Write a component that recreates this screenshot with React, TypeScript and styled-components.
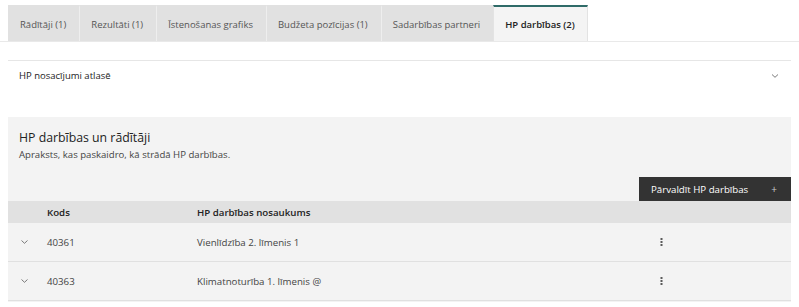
import { createGlobalStyle } from "styled-components";
import styled from "styled-components";

const GlobalStyle = createGlobalStyle`
	body {
		margin: 0;
		background: #fff;
		font-family: "Open Sans", "Noto Sans", sans-serif;
		color: #333;
	}
`;

interface TabProps {
	active?: boolean;
}

const tabs = [
	{ label: "Rādītāji (1)" },
	{ label: "Rezultāti (1)" },
	{ label: "Īstenošanas grafiks" },
	{ label: "Budžeta pozīcijas (1)" },
	{ label: "Sadarbības partneri" },
	{ label: "HP darbības (2)", active: true },
];

const rows = [
	{ code: "40361", name: "Vienlīdzība 2. līmenis 1" },
	{ code: "40363", name: "Klimatnoturība 1. līmenis @" },
];

function Chevron({ width = 7 }: { width?: number }) {
	return (
		<svg width={width} height={4} viewBox="0 0 7 4" fill="none">
			<path d="M0.5 0.5 L3.5 3.3 L6.5 0.5" stroke="#6b6b6b" strokeWidth="0.9" />
		</svg>
	);
}

function Kebab() {
	return (
		<svg width={3} height={8} viewBox="0 0 3 8">
			<rect x="0.5" y="0" width="2" height="2" fill="#5a5a5a" />
			<rect x="0.5" y="3" width="2" height="2" fill="#5a5a5a" />
			<rect x="0.5" y="6" width="2" height="2" fill="#5a5a5a" />
		</svg>
	);
}

function App() {
	return (
		<>
			<GlobalStyle />
			<TabBar>
				{tabs.map((t) => (
					<Tab key={t.label} active={t.active}>
						{t.label}
					</Tab>
				))}
			</TabBar>
			<Content>
				<Accordion>
					<AccordionTitle>HP nosacījumi atlasē</AccordionTitle>
					<Chevron width={8} />
				</Accordion>
				<Section>
					<SectionHead>
						<Title>HP darbības un rādītāji</Title>
						<Subtitle>Apraksts, kas paskaidro, kā strādā HP darbības.</Subtitle>
					</SectionHead>
					<Toolbar>
						<ManageButton>
							<span>Pārvaldīt HP darbības</span>
							<Plus>+</Plus>
						</ManageButton>
					</Toolbar>
					<HeaderRow>
						<Cell />
						<HeadCell>Kods</HeadCell>
						<HeadCell>HP darbības nosaukums</HeadCell>
						<Cell />
					</HeaderRow>
					{rows.map((r) => (
						<Row key={r.code}>
							<ExpandCell>
								<Chevron />
							</ExpandCell>
							<Cell>{r.code}</Cell>
							<Cell>{r.name}</Cell>
							<MenuCell>
								<Kebab />
							</MenuCell>
						</Row>
					))}
				</Section>
			</Content>
		</>
	);
}

const TabBar = styled.div`
	display: flex;
	padding: 5px 8px 0;
	border-bottom: 1px solid #e9e9e9;
`;

const Tab = styled.div<TabProps>`
	height: 36px;
	box-sizing: border-box;
	display: flex;
	align-items: center;
	padding: 0 12px 0 11px;
	font-size: 9.5px;
	white-space: nowrap;
	background: ${({ active }) => (active ? "#f4f4f4" : "#e1e1e1")};
	color: ${({ active }) => (active ? "#222" : "#555")};
	font-weight: ${({ active }) => (active ? 600 : 400)};
	border-top: 2px solid ${({ active }) => (active ? "#2f6b68" : "#e1e1e1")};
	border-left: 1px solid ${({ active }) => (active ? "#e3e3e3" : "#eeeeee")};
	border-right: 1px solid ${({ active }) => (active ? "#e3e3e3" : "transparent")};
	&:first-child {
		border-left-color: #e1e1e1;
	}
`;

const Content = styled.div`
	padding: 0 8px;
`;

const Accordion = styled.div`
	margin-top: 18px;
	border-top: 1px solid #e6e6e6;
	height: 29px;
	display: flex;
	align-items: center;
	justify-content: space-between;
	padding: 0 12px 0 11px;
	margin-bottom: 27px;
`;

const AccordionTitle = styled.span`
	font-size: 9.5px;
	color: #222;
`;

const Section = styled.div`
	background: #f3f3f3;
	padding-bottom: 1px;
`;

const SectionHead = styled.div`
	padding: 12px 11px 0;
`;

const Title = styled.div`
	font-size: 12.3px;
	line-height: 18px;
	color: #222;
`;

const Subtitle = styled.div`
	font-size: 9.6px;
	line-height: 14px;
	margin-top: 1px;
	color: #444;
`;

const Toolbar = styled.div`
	display: flex;
	justify-content: flex-end;
	margin-top: 15px;
`;

const ManageButton = styled.button`
	width: 152px;
	height: 24px;
	border: none;
	background: #333333;
	color: #fff;
	font-family: inherit;
	font-size: 9.7px;
	display: flex;
	align-items: center;
	justify-content: space-between;
	padding: 0 14px 0 12px;
	cursor: pointer;
`;

const Plus = styled.span`
	font-size: 10px;
	color: #ccc;
`;

const grid = `
	display: grid;
	grid-template-columns: 39px 150px 456px 1fr;
	align-items: center;
`;

const HeaderRow = styled.div`
	${grid};
	height: 22px;
	background: #e1e1e1;
`;

const Row = styled.div`
	${grid};
	height: 38px;
	border-bottom: 1px solid #e0e0e0;
`;

const Cell = styled.div`
	font-size: 9.7px;
	color: #444;
	white-space: nowrap;
`;

const HeadCell = styled(Cell)`
	font-weight: 600;
	color: #222;
`;

const ExpandCell = styled.div`
	display: flex;
	padding-left: 13px;
`;

const MenuCell = styled.div`
	display: flex;
	padding-left: 7px;
`;

export default App;
